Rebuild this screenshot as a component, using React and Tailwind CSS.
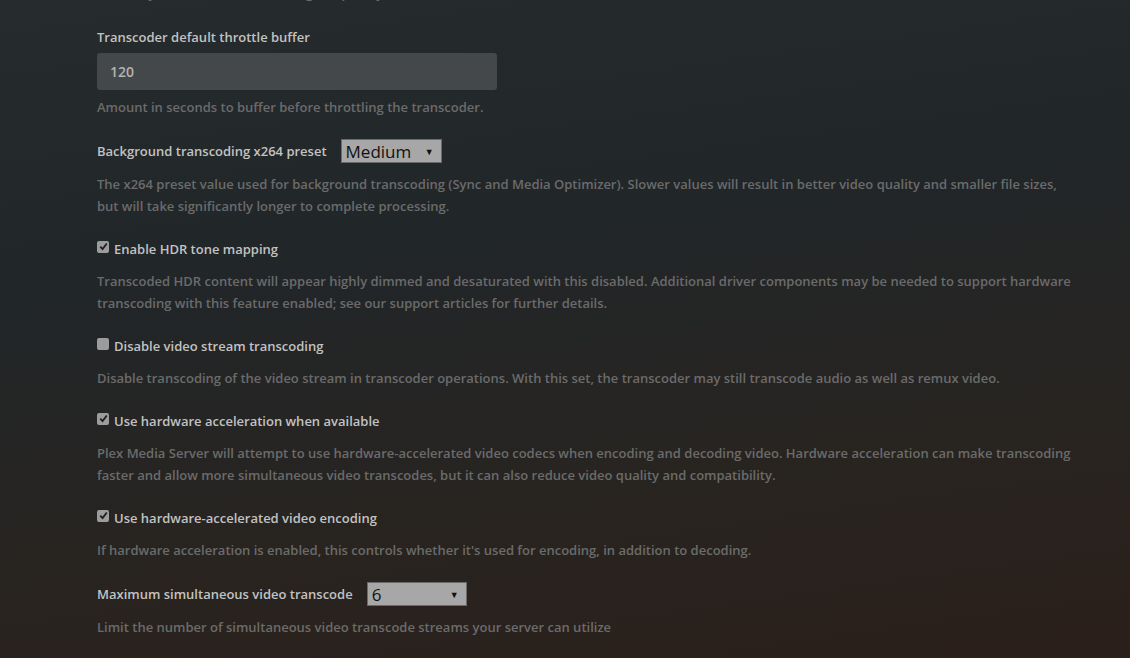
import React from "react";

const Check = ({ checked }) => (
  <span className="mr-[5px] mt-[-5px] inline-flex h-[12px] w-[12px] shrink-0 items-center justify-center rounded-[2px] bg-[#9c9c9c]">
    {checked && (
      <svg viewBox="0 0 12 12" className="h-[11px] w-[11px]">
        <path d="M2.5 6.2 L5 8.8 L9.6 2.8" fill="none" stroke="#1e1e1e" strokeWidth="2" />
      </svg>
    )}
  </span>
);

const Select = ({ value, width }) => (
  <div
    className={`ml-[14px] flex h-[24px] items-center justify-between border border-[#6a6a6a] bg-[#a7a7a7] pl-[4px] pr-[7px] text-[17px] leading-none font-normal text-[#111] ${width}`}
    style={{ fontFamily: '"Open Sans", sans-serif' }}
  >
    <span>{value}</span>
    <span className="text-[9px]">▼</span>
  </div>
);

const Desc = ({ children }) => (
  <p className="mt-[10px] text-[13px] leading-[22px] text-[#6b6b6b]">{children}</p>
);

const Setting = ({ label, checkbox, checked, select, selectWidth, children }) => (
  <div className="mb-[21px]">
    <div className="flex min-h-[22px] items-center text-[13px] leading-[22px] text-[#c2c2c2]">
      {checkbox && <Check checked={checked} />}
      <span>{label}</span>
      {select && <Select value={select} width={selectWidth} />}
    </div>
    <Desc>{children}</Desc>
  </div>
);

export default function App() {
  return (
    <div
      className="h-[658px] w-[1130px] overflow-hidden bg-[linear-gradient(172deg,#262b2d_0%,#212629_35%,#282420_72%,#2b1f1a_100%)] font-semibold"
      style={{ fontFamily: '"Open Sans", sans-serif' }}
    >
      <div className="ml-[97px] -mt-[18px] w-[976px]">
        <p className="mb-[22px] text-[13px] leading-[22px] text-[#6b6b6b]">
          Directory to use when transcoding temporary files.
        </p>

        <div className="mb-[21px]">
          <div className="text-[13px] leading-[22px] text-[#c2c2c2]">Transcoder default throttle buffer</div>
          <div className="mt-[5px] flex h-[37px] w-[400px] items-center rounded-[3px] bg-[#45484a] px-[13px] text-[14px] text-[#b3b3b3]">
            120
          </div>
          <p className="mt-[6px] text-[13px] leading-[22px] text-[#6b6b6b]">
            Amount in seconds to buffer before throttling the transcoder.
          </p>
        </div>

        <Setting label="Background transcoding x264 preset" select="Medium" selectWidth="w-[101px]">
          The x264 preset value used for background transcoding (Sync and Media Optimizer). Slower values will result in better video quality and smaller file sizes, but will take significantly longer to complete processing.
        </Setting>

        <Setting label="Enable HDR tone mapping" checkbox checked>
          Transcoded HDR content will appear highly dimmed and desaturated with this disabled. Additional driver components may be needed to support hardware transcoding with this feature enabled; see our support articles for further details.
        </Setting>

        <Setting label="Disable video stream transcoding" checkbox>
          Disable transcoding of the video stream in transcoder operations. With this set, the transcoder may still transcode audio as well as remux video.
        </Setting>

        <Setting label="Use hardware acceleration when available" checkbox checked>
          Plex Media Server will attempt to use hardware-accelerated video codecs when encoding and decoding video. Hardware acceleration can make transcoding faster and allow more simultaneous video transcodes, but it can also reduce video quality and compatibility.
        </Setting>

        <Setting label="Use hardware-accelerated video encoding" checkbox checked>
          If hardware acceleration is enabled, this controls whether it's used for encoding, in addition to decoding.
        </Setting>

        <Setting label="Maximum simultaneous video transcode" select="6" selectWidth="w-[100px]">
          Limit the number of simultaneous video transcode streams your server can utilize
        </Setting>
      </div>
    </div>
  );
}
